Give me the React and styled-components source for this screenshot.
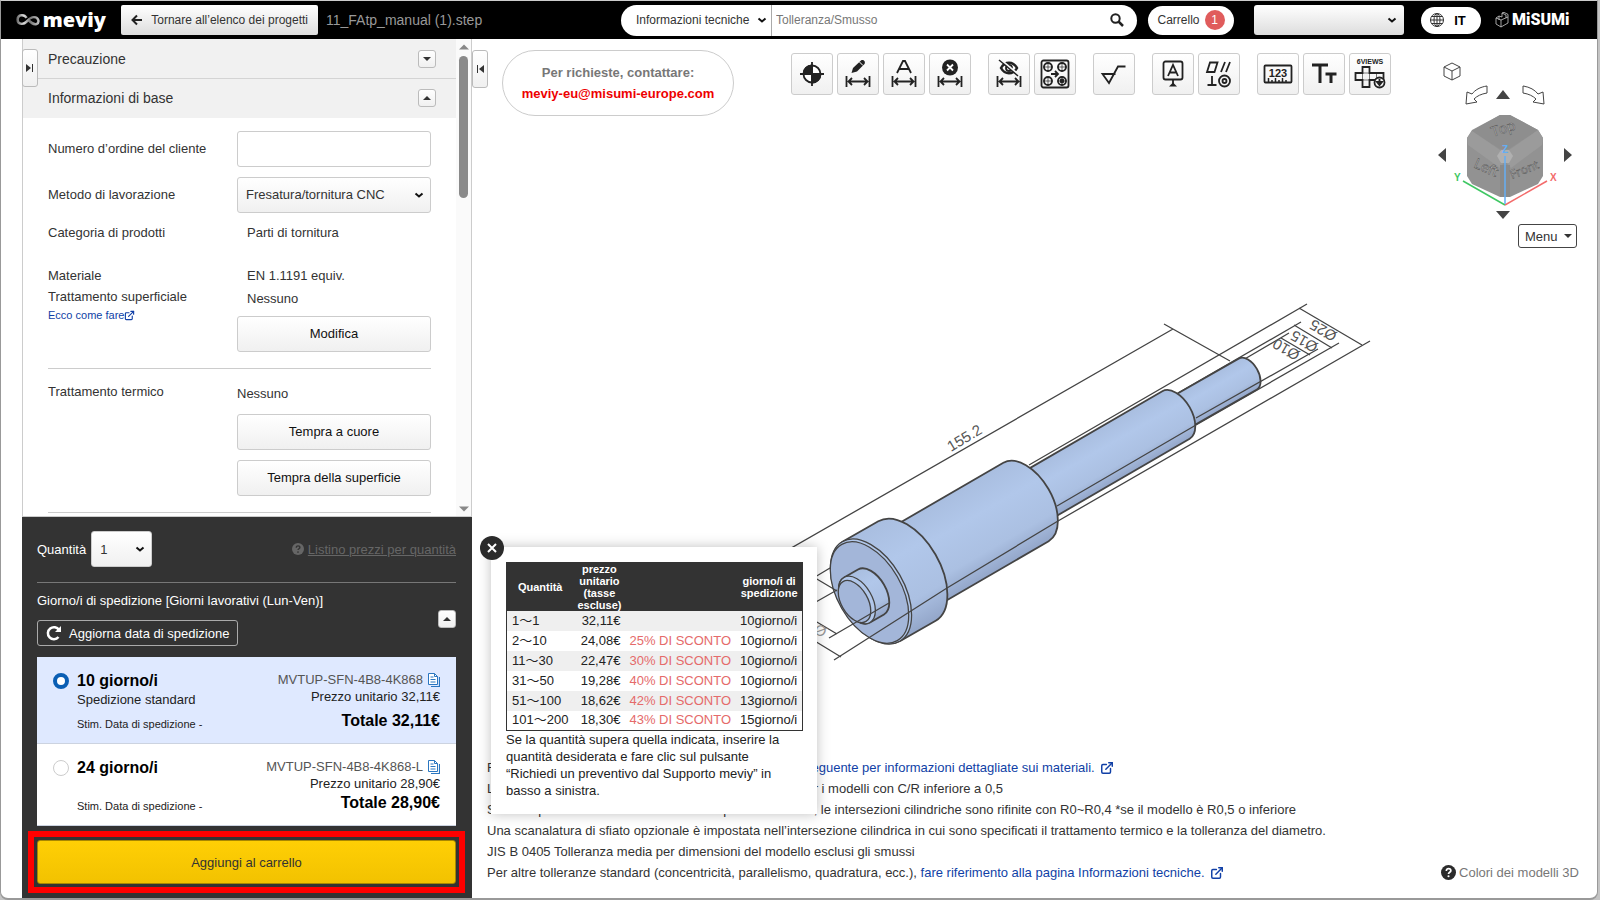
import React, { useState } from "react";
import styled, { createGlobalStyle, css } from "styled-components";
import { ExternalLink } from "lucide-react";

const GlobalStyle = createGlobalStyle`
  * {
    box-sizing: border-box;
  }
  body {
    margin: 0;
    background: #c4c4c4;
    color: #333;
    font-family: "Liberation Sans", Arial, sans-serif;
    font-size: 13px;
  }
  button,
  input,
  select {
    color: #333;
    font: inherit;
  }
  a {
    color: #103fa6;
    text-decoration: none;
  }
`;

const raised = css`
  border: 1px solid #ccc;
  border-radius: 3px;
  background: linear-gradient(#fff, #f0f0f0);
`;

const Window = styled.div`
  display: flex;
  flex-direction: column;
  min-height: 100vh;
  margin-right: 2px;
  border: 1px solid #999;
  border-top-color: #ccc;
  border-bottom-width: 2px;
  border-radius: 0 0 8px 8px;
  background: #fff;
`;

/* header */

const TopBar = styled.header`
  display: flex;
  align-items: center;
  height: 38px;
  padding: 0 26px 0 15px;
  background: #000;
`;

const Brand = styled.a`
  display: flex;
  align-items: center;
  gap: 3px;
  width: 90px;
  color: #fff;
  font: 800 20px/24px "Open Sans", sans-serif;
`;

const BackButton = styled.button`
  display: flex;
  align-items: center;
  justify-content: space-between;
  width: 197px;
  height: 30px;
  margin: 0 8px 0 15px;
  padding: 0 10px;
  border: 0;
  border-radius: 2px;
  background: linear-gradient(#fff, #ddd);
  font-size: 12px;
`;

const FileName = styled.span`
  color: #999;
  font-size: 14px;
`;

const Search = styled.form`
  display: flex;
  align-items: center;
  width: 516px;
  height: 31px;
  margin-left: auto;
  padding: 0 13px 0 7px;
  border-radius: 16px;
  background: #fff;
  font-size: 12px;
`;

const SearchInput = styled.input`
  flex: 1;
  height: 31px;
  min-width: 0;
  padding: 0 4px;
  border: 0;
  border-left: 1px solid #aaa;
  outline: 0;
  &::placeholder {
    color: #777;
    opacity: 1;
  }
`;

const PlainButton = styled.button`
  display: flex;
  padding: 0;
  border: 0;
  background: none;
`;

const Pill = styled.button`
  display: flex;
  align-items: center;
  justify-content: center;
  gap: 5px;
  width: 86px;
  height: 29px;
  margin: 0 20px 0 11px;
  padding: 0;
  border: 0;
  border-radius: 15px;
  background: #fff;
  font-size: 12px;
`;

const Language = styled(Pill)`
  gap: 10px;
  width: 60px;
  height: 27px;
  margin: 0 14px 0 17px;
  padding-right: 6px;
  color: #000;
  font-size: 13px;
  font-weight: bold;
`;

const Count = styled.span`
  width: 20px;
  height: 20px;
  border-radius: 50%;
  background: #e05c5c;
  color: #fff;
  line-height: 20px;
  text-align: center;
`;

const Misumi = styled.a`
  display: flex;
  align-items: center;
  gap: 3px;
  width: 76px;
  color: #fff;
  font: 900 16px/20px Roboto, sans-serif;
`;

const SelectBox = styled.div`
  display: grid;
  align-items: center;
  width: ${(props) => props.$width};
  margin: ${(props) => props.$margin || "0"};
  > * {
    grid-area: 1 / 1;
  }
  > svg {
    justify-self: end;
    margin-right: ${(props) => (props.$flat ? "4px" : "7px")};
    pointer-events: none;
  }
`;

const SelectInput = styled.select`
  width: 100%;
  height: ${(props) => props.$height || "36px"};
  padding: 0 8px;
  ${raised}
  appearance: none;
  ${(props) => props.$flat && "border: 0; background: none;"}
  ${(props) => props.$dark && "border: 0; background: linear-gradient(#fff, #ddd);"}
`;

const Select = ({ width, margin, flat, children, ...props }) => (
  <SelectBox $width={width} $margin={margin} $flat={flat}>
    <SelectInput $flat={flat} {...props}>
      {children}
    </SelectInput>
    <svg width="10" height="10" viewBox="0 0 10 10">
      <path d="M1.5 3.5 5 6.5 8.500 3.500" fill="none" stroke="#111" strokeWidth="2" />
    </svg>
  </SelectBox>
);

/* sidebar */

const Main = styled.main`
  display: flex;
  flex: 1;
  padding-left: 21px;
`;

const Sidebar = styled.aside`
  position: relative;
  display: flex;
  flex: none;
  flex-direction: column;
  width: 450px;
  border: solid #ccc;
  border-width: 0 1px;
`;

const Scroller = styled.div`
  display: flex;
  flex: 1;
  border-bottom: 1px solid #ccc;
`;

const Form = styled.div`
  flex: 1;
`;

const ScrollBar = styled.div`
  display: flex;
  flex-direction: column;
  align-items: center;
  width: 15px;
  padding: 3px 0 2px;
  background: #fafafa;
`;

const Thumb = styled.div`
  width: 9px;
  height: 142px;
  margin: 4px 0 auto;
  border-radius: 5px;
  background: #8a8a8a;
`;

const SectionHead = styled.h2`
  display: flex;
  align-items: center;
  justify-content: space-between;
  height: ${(props) => (props.$open ? "39px" : "40px")};
  margin: 0;
  padding: 0 20px 0 25px;
  border-bottom: 1px solid ${(props) => (props.$open ? "#f1f1f1" : "#d4d4d4")};
  background: #f1f1f1;
  font-size: 14px;
  font-weight: normal;
`;

const Toggle = styled.button`
  display: flex;
  align-items: center;
  justify-content: center;
  width: 18px;
  height: 18px;
  padding: 0;
  ${raised}
  border-color: #bbb;
`;

const EdgeTab = styled.button`
  display: flex;
  align-items: center;
  justify-content: center;
  width: 16px;
  height: 38px;
  padding: 0;
  ${raised}
  border-color: #bbb;
`;

const SidebarTab = styled(EdgeTab)`
  position: absolute;
  top: 10px;
  left: -1px;
`;

const Section = styled.section`
  display: grid;
  grid-template-columns: 189px 1fr;
  row-gap: 10px;
  margin: 0 25px;
  padding: 13px 0 16px;
  border-bottom: 1px solid #ccc;
  line-height: 20px;
`;

const Label = styled.label`
  align-self: center;
`;

const TextInput = styled.input`
  width: 100%;
  height: 36px;
  padding: 0 8px;
  border: 1px solid #ccc;
  border-radius: 3px;
`;

const Names = styled.div`
  display: flex;
  flex-direction: column;
  gap: 1px;
  padding-top: ${(props) => props.$top || "0"};
`;

const Values = styled(Names)`
  gap: ${(props) => props.$gap || "3px"};
`;

const Value = styled.span`
  padding-left: ${(props) => (props.$inset ? "10px" : "0")};
`;

const SmallLink = styled.a`
  display: flex;
  align-items: center;
  font-size: 11px;
  line-height: 14px;
`;

const FormButton = styled.button`
  height: 36px;
  ${raised}
  color: #111;
  ${Value}[data-last] + & {
    margin-top: 4px;
  }
`;

/* order panel */

const Order = styled.section`
  margin: 0 -1px;
  padding: 14px 16px 5px 15px;
  background: #333;
  color: #fff;
`;

const QuantityRow = styled.div`
  display: flex;
  align-items: center;
  padding-bottom: 15px;
  border-bottom: 1px solid #777;
`;

const PriceListLink = styled.a`
  display: flex;
  align-items: center;
  gap: 4px;
  margin-left: auto;
  color: #666;
  span {
    text-decoration: underline;
  }
`;

const ShippingTitle = styled.h3`
  margin: 9px 0 0;
  font-size: 13px;
  font-weight: normal;
  line-height: 18px;
`;

const ShippingRow = styled.div`
  display: flex;
  align-items: flex-start;
  justify-content: space-between;
  margin-bottom: 11px;
`;

const Refresh = styled.button`
  display: flex;
  align-items: center;
  gap: 7px;
  height: 26px;
  margin-top: 10px;
  padding: 0 8px;
  border: 1px solid #aaa;
  border-radius: 3px;
  background: none;
  color: #fff;
`;

const Option = styled.label`
  display: flex;
  min-height: ${(props) => (props.$selected ? "87px" : "82px")};
  padding: 14px 16px 12px;
  border-bottom: 1px solid #ccd3e0;
  background: ${(props) => (props.$selected ? "#dfe9ff" : "#fff")};
  color: #222;
`;

const Radio = styled.input`
  width: 16px;
  height: 16px;
  margin: 2px 8px 0 15px;
  border: 1px solid #ccc;
  border-radius: 50%;
  background: #fff;
  appearance: none;
  ${Option} & {
    margin-left: 0;
  }
  &:checked {
    border: 4px solid #0a5eb4;
  }
`;

const OptionSide = styled.span`
  display: flex;
  flex-direction: column;
  line-height: 17px;
  ${(props) => props.$right && "margin-left: auto; align-items: flex-end;"}
`;

const Strong = styled.strong`
  color: #000;
  font-size: 16px;
  line-height: 20px;
`;

const Bottom = styled.span`
  margin-top: auto;
  font-size: 11px;
  line-height: 14px;
`;

const Code = styled.span`
  display: flex;
  align-items: center;
  gap: 5px;
  color: #555;
`;

const Highlight = styled.div`
  margin: 5px -9px 0;
  padding: 3px;
  border: 6px solid #f00;
`;

const CartButton = styled.button`
  display: block;
  width: 100%;
  height: 44px;
  border: 1px solid #a88700;
  border-radius: 3px;
  background: linear-gradient(#ffcf05, #f2c200);
`;

/* viewer */

const Viewer = styled.section`
  position: relative;
  display: flex;
  flex: 1;
  flex-direction: column;
  min-width: 0;
`;

const ViewerTop = styled.div`
  display: flex;
  align-items: flex-start;
  padding: 11px 20px 0 0;
`;

const Contact = styled.address`
  width: 232px;
  margin: 0 57px 0 14px;
  padding: 11px 0;
  border: 1px solid #ccc;
  border-radius: 33px;
  color: #777;
  font-style: normal;
  font-weight: bold;
  line-height: 21px;
  text-align: center;
  a {
    color: #e00;
  }
`;

const Tools = styled.div`
  display: flex;
  gap: 17px;
  padding-top: 3px;
`;

const ToolGroup = styled.div`
  display: flex;
  gap: 4px;
`;

const Tool = styled.button`
  width: 42px;
  height: 42px;
  padding: 0;
  ${raised}
  svg {
    display: block;
    margin: -1px;
  }
`;

const Orientation = styled.div`
  display: flex;
  flex-direction: column;
  align-items: flex-end;
  margin-left: auto;
  padding-top: 2px;
`;

const MenuButton = styled.button`
  display: flex;
  align-items: center;
  justify-content: space-between;
  width: 59px;
  height: 24px;
  padding: 0 4px 0 6px;
  border: 1px solid #444;
  border-radius: 3px;
  background: #fff;
`;

const Stage = styled.div`
  display: flex;
  flex: 1;
  align-items: center;
  justify-content: center;
  min-height: 0;
`;

const ViewerFoot = styled.footer`
  display: flex;
  align-items: flex-end;
  justify-content: space-between;
  padding: 0 18px 15px 15px;
  line-height: 21px;
  white-space: nowrap;
`;

const Note = styled.p`
  margin: 0;
  svg {
    margin-left: 2px;
    vertical-align: -3px;
  }
`;

const ColourHelp = styled.a`
  display: flex;
  align-items: center;
  gap: 3px;
  color: #777;
`;

const Popup = styled.div`
  position: absolute;
  bottom: 84px;
  left: 19px;
  width: 326px;
  padding: 15px;
  background: #fff;
  box-shadow: 0 0 12px rgba(0, 0, 0, 0.25);
  color: #222;
`;

const Close = styled.button`
  position: absolute;
  top: -11px;
  left: -11px;
  display: flex;
  align-items: center;
  justify-content: center;
  width: 24px;
  height: 24px;
  padding: 0;
  border: 0;
  border-radius: 50%;
  background: #2b2b2b;
`;

const PriceTable = styled.table`
  width: 100%;
  border: 1px solid #333;
  border-collapse: collapse;
  font-family: "Liberation Sans", Arial, "Noto Sans CJK JP", sans-serif;
  line-height: 18px;
  th {
    padding: 0 4px;
    background: #333;
    color: #fff;
    font-size: 11px;
    line-height: 12px;
  }
  td {
    height: 20px;
    padding: 0 5px 0 4px;
    text-align: right;
    white-space: nowrap;
  }
  td:first-child {
    padding-left: 5px;
    text-align: left;
  }
  tbody tr:nth-child(odd) {
    background: #efefef;
  }
`;

const Discount = styled.td`
  color: #e56a6a;
`;

const PopupText = styled.p`
  margin: 0;
  line-height: 17px;
`;

/* icons */

const Triangle = ({ down, size = 8, fill = "#333" }) => (
  <svg width={size} height={size} viewBox="0 0 8 8">
    <path d={down ? "M0 2h8L4 6z" : "M0 6h8L4 2z"} fill={fill} />
  </svg>
);

const Question = ({ bg, fg, size }) => (
  <svg width={size} height={size} viewBox="0 0 14 14">
    <circle cx="7" cy="7" r="7" fill={bg} />
    <path
      d="M5 5.500C5 4 6 3.300 7 3.300s2.200.7 2.200 2c0 1.400-2.200 1.500-2.200 3"
      fill="none"
      stroke={fg}
      strokeWidth="1.600"
    />
    <circle cx="7" cy="10.500" r="1" fill={fg} />
  </svg>
);

const CopyIcon = () => (
  <svg width="12" height="14" viewBox="0 0 12 14" fill="none" stroke="#2a76c0">
    <path d="M.5.5h6l3 3v8h-9z" fill="#fff" />
    <path d="M2.500 4h3M2.500 6.500h5M2.500 9h5M6.500.5v3h3" />
    <path d="M11.500 4v9.500H3" strokeWidth="1.200" />
  </svg>
);

const Measure = () => (
  <path d="M9.500 23v11M32.500 23v11M11.500 28.500h19M15 25l-3.500 3.500L15 32M27 25l3.500 3.500L27 32" />
);

const Hole = ({ x, y }) => (
  <>
    <circle cx={x} cy={y} r="4" />
    <path d={`M${x - 5} ${y}h10M${x} ${y - 5}v10`} strokeWidth=".7" />
  </>
);

const toolGroups = [
  [
    [
      "Origine",
      <>
        <circle cx="21" cy="21" r="8.500" fill="#fff" />
        <path d="M21 21V12.500A8.500 8.500 0 0 0 12.500 21zM21 21v8.500A8.500 8.500 0 0 0 29.500 21z" fill="#222" />
        <path d="M21 9v24M9 21h24" />
      </>,
    ],
    [
      "Modifica quota",
      <>
        <path d="m14.500 20 1.500-5 8-7.500c2-1.500 5 1 3.500 3.500L20 18.500z" fill="#222" stroke="none" />
        <path d="m22.500 9 3.500 3.500" stroke="#fff" strokeWidth="1" />
        <Measure />
      </>,
    ],
    [
      "Testo quota",
      <>
        <path d="m14 20 6-12h2l6 12M16.500 16h9" />
        <Measure />
      </>,
    ],
    [
      "Elimina quota",
      <>
        <circle cx="21" cy="14.500" r="8" fill="#222" stroke="none" />
        <path d="m18 11.500 6 6m0-6-6 6" stroke="#fff" />
        <Measure />
      </>,
    ],
  ],
  [
    [
      "Nascondi quota",
      <>
        <path d="M13 15c4-7 12-7 16 0-4 7-12 7-16 0z" strokeWidth="2.500" />
        <circle cx="21" cy="15" r="3" />
        <path d="m13 7 18 15" stroke="#f8f8f8" strokeWidth="2" />
        <path d="m11 7 19 16" strokeWidth="1.500" />
        <Measure />
      </>,
    ],
    [
      "Gruppi di fori",
      <>
        <rect x="7.500" y="7.500" width="27" height="27" rx="2" />
        <Hole x={14} y={14} />
        <Hole x={28} y={14} />
        <Hole x={14} y={28} />
        <Hole x={28} y={28} />
        <circle cx="28" cy="28" r="1.500" fill="#222" />
        <path d="M17 21h7M21 18l3 3-3 3" />
      </>,
    ],
  ],
  [["Rugosità", <path d="M22.500 21H9.500l6.500 9 9-16.500h7.500" />]],
  [
    [
      "Riferimento",
      <>
        <rect x="11.500" y="8.500" width="19" height="18" rx="2" />
        <path d="m16 23 5-11 5 11M18 19.500h6M21 27v4" />
        <path d="m17 33.500 4-4 4 4z" fill="#222" stroke="none" />
      </>,
    ],
    [
      "Tolleranza geometrica",
      <>
        <path d="M12 9.500h7.500l-3 9.500H9zM23 19l4-10M28 19l4-10M14 23v9M9.500 32h9" />
        <circle cx="26.500" cy="28" r="5.500" />
        <circle cx="26.500" cy="28" r="2" />
      </>,
    ],
  ],
  [
    [
      "Numerazione",
      <>
        <rect x="7.500" y="12.500" width="27" height="17" rx="1" />
        <path d="M11.500 25v4M15 27v2M18.500 25v4M22 27v2M25.500 25v4M29 27v2" strokeWidth="1.500" />
        <text x="21" y="23.500" fontSize="11" fontWeight="bold" textAnchor="middle" fill="#222" stroke="none">
          123
        </text>
      </>,
    ],
    ["Dimensione testo", <path d="M9 12h16M17 12v18M22.500 21h11M28 21v9" strokeWidth="3" />],
    [
      "6 viste",
      <>
        <text x="21" y="11" fontSize="7" fontWeight="bold" textAnchor="middle" fill="#222" stroke="none">
          6VIEWS
        </text>
        <path d="M13.500 14h7v6h14v7h-14v7h-7v-7h-7v-7h7z" />
        <path d="M13.500 20h7v7h-7zM27.500 20v7" strokeWidth=".6" />
        <circle cx="30.500" cy="29.500" r="5" fill="#f4f4f4" />
        <path d="M30.500 26v5M28 29l2.500 3 2.500-3z" fill="#222" />
      </>,
    ],
  ],
];

/* 3D drawing: axis runs at 30 degrees, round faces are ellipses turned by 60 degrees */

const RATIO = 0.577;
const LINE = "#444";

const Cylinder = ({ id, from, to, r }) => {
  const [x1, y1] = from;
  const [x2, y2] = to;
  const ux = r * 0.5;
  const uy = r * 0.866;
  const arc = `A${r} ${r * RATIO} 60 0`;
  return (
    <>
      <linearGradient id={id} gradientUnits="userSpaceOnUse" x1={x1 - ux} y1={y1 - uy} x2={x1 + ux} y2={y1 + uy}>
        <stop offset="0" stopColor="#a9bee0" />
        <stop offset=".35" stopColor="#b1c7ea" />
        <stop offset=".75" stopColor="#abc0e2" />
        <stop offset="1" stopColor="#93a6c9" />
      </linearGradient>
      <path
        d={`M${x1 - ux} ${y1 - uy}L${x2 - ux} ${y2 - uy}${arc} 1 ${x2 + ux} ${y2 + uy}L${x1 + ux} ${y1 + uy}${arc} 1 ${x1 - ux} ${y1 - uy}z`}
        fill={`url(#${id})`}
        strokeWidth="1.800"
      />
    </>
  );
};

const Face = ({ x, y, r, fill = "#a3b6d9" }) => (
  <ellipse rx={r} ry={r * RATIO} fill={fill} transform={`translate(${x} ${y}) rotate(60)`} />
);

const Dimension = ({ x, y, angle, fill = "#555", children }) => (
  <text transform={`translate(${x} ${y}) rotate(${angle})`} fontSize="15" fill={fill} stroke="none">
    {children}
  </text>
);

const Model = () => (
  <svg width="692" height="500" viewBox="689 253 692 500" fill="none" stroke={LINE} strokeWidth="1.300">
    <path d="M760 566 1173 329M1164 324l66 37M1029 465l278-161M1299 308l63 37M1178 393l123-71M1294 325l38 23M1243 360l46-27M1281 338l29 17" />
    <Cylinder id="tip" from={[1176, 415]} to={[1248, 374]} r={17.9} />
    <Cylinder id="neck" from={[1026, 502]} to={[1176, 415]} r={27.4} />
    <Cylinder id="barrel" from={[907, 571]} to={[1026, 502]} r={45.3} />
    <Cylinder id="head" from={[872, 591]} to={[907, 571]} r={57.4} />
    <Face x={871} y={591.5} r={57.4} fill="#b1c7ea" />
    <Face x={869.5} y={592.5} r={55.5} />
    <Cylinder id="boss" from={[857, 600]} to={[871, 592]} r={26} />
    <Face x={857} y={600} r={26} fill="#b1c7ea" />
    <Face x={854.5} y={601.5} r={23} />
    <path d="M834 660 947 588 1058 521 1370 341M1057 506l139-81 143-82M1196 418l122-69" />
    <path d="M800 586l30-18M800 569l37 22M800 611l37-21M800 612l37 22M829 638l60-35M800 632l41 25" />
    <Dimension x={951} y={452} angle={-31}>
      155.2
    </Dimension>
    <Dimension x={1338} y={333} angle={210}>
      Ø25
    </Dimension>
    <Dimension x={1319} y={344} angle={210}>
      Ø15
    </Dimension>
    <Dimension x={1301} y={352} angle={210}>
      Ø10
    </Dimension>
    <Dimension x={828} y={629} angle={210} fill="#999">
      Ø
    </Dimension>
  </svg>
);

const ViewCube = () => (
  <svg width="142" height="172" viewBox="1437 52 142 172" fill="none" stroke="#444">
    <path d="m1446 67 8-4 8 4v9l-8 4-8-4zM1446 67l8 4 8-4M1454 71v9" />
    <path d="M1489 86c-7 1-12 4-15 8l-5-2-1 12 11-2-3-3c3-3 7-5 13-6zM1525 86c7 1 12 4 15 8l5-2 1 12-11-2 3-3c-3-3-7-5-13-6z" />
    <path
      d="m1505 90 7 9h-14zM1505 219l7-8h-14zM1440 155l8-7v14zM1574 155l-8-7v14z"
      fill="#444"
      stroke="none"
    />
    <g stroke="none">
      <path d="M1502 115h10l28 15 5 8v38l-5 8-28 13h-10l-28-13-5-8v-38l5-8z" fill="#929292" />
      <path d="m1474 131 28-16h10l28 15-29 19h-9z" fill="#8e8e8e" />
      <path d="m1469 138 5-7 28 19 5 11-5 7-32-23zM1545 138l-5-8-29 20-4 11 6 7 31-23z" fill="#9b9b9b" />
      <path d="M1502 165h10v32h-10z" fill="#8a8a8a" />
      <path d="m1499 156 4-6h8l4 6-4 7h-8z" fill="#b0b0b0" />
      <g fill="#c4c4c4" stroke="#555" strokeWidth=".5" fontSize="14" fontFamily="Open Sans, sans-serif">
        <text transform="translate(1495 137) rotate(-18)">Top</text>
        <text transform="translate(1475 167) rotate(24)">Left</text>
        <text transform="translate(1514 179) rotate(-22)" fontSize="12">
          Front
        </text>
      </g>
    </g>
    <path d="m1507 205-42-24" stroke="#3fc763" strokeWidth="1.500" />
    <path d="m1507 205 42-24" stroke="#f36b6b" strokeWidth="1.500" />
    <path d="M1507 204v-48" stroke="#64aef4" strokeWidth="1.500" />
    <g stroke="none" fontSize="10" fontWeight="bold">
      <text x="1456" y="181" fill="#3fc763">
        Y
      </text>
      <text x="1552" y="181" fill="#f36b6b">
        X
      </text>
      <text x="1504" y="153" fill="#64aef4">
        Z
      </text>
    </g>
  </svg>
);

const LinkIcon = ({ size = 14 }) => <ExternalLink size={size} strokeWidth={2.5} />;

const prices = [
  ["1〜1", "32,11€", "", "10giorno/i"],
  ["2〜10", "24,08€", "25% DI SCONTO", "10giorno/i"],
  ["11〜30", "22,47€", "30% DI SCONTO", "10giorno/i"],
  ["31〜50", "19,28€", "40% DI SCONTO", "10giorno/i"],
  ["51〜100", "18,62€", "42% DI SCONTO", "13giorno/i"],
  ["101〜200", "18,30€", "43% DI SCONTO", "15giorno/i"],
];

const options = [
  { days: "10", sub: "Spedizione standard", code: "MVTUP-SFN-4B8-4K868", price: "32,11€" },
  { days: "24", sub: "", code: "MVTUP-SFN-4B8-4K868-L", price: "28,90€" },
];

const Header = () => (
  <TopBar>
    <Brand href="#">
      <svg width="29" height="16" viewBox="0 0 29 16" fill="none">
        <defs>
          <linearGradient id="loop">
            <stop offset="0" stopColor="#777" />
            <stop offset=".3" stopColor="#ddd" />
            <stop offset=".6" stopColor="#777" />
            <stop offset="1" stopColor="#bbb" />
          </linearGradient>
        </defs>
        <path
          d="M13 5.500C10 .5 2 1 2 7.500c0 7 8 6 11 2.500 3-3.500 5-5.500 9-5.500 6 0 7 7 3 8.500-4 1-7-2-11-6"
          stroke="url(#loop)"
          strokeWidth="3"
        />
      </svg>
      meviy
    </Brand>
    <BackButton>
      <svg width="12" height="12" viewBox="0 0 12 12" fill="none" stroke="#222" strokeWidth="2">
        <path d="M11 6H2M6 1.500 1.500 6 6 10.500" />
      </svg>
      Tornare all’elenco dei progetti
    </BackButton>
    <FileName>11_FAtp_manual (1).step</FileName>
    <Search>
      <Select flat width="143px" $height="31px" aria-label="Ambito di ricerca">
        <option>Informazioni tecniche</option>
      </Select>
      <SearchInput placeholder="Tolleranza/Smusso" aria-label="Cerca" />
      <PlainButton type="button" aria-label="Avvia ricerca">
        <svg width="14" height="14" viewBox="0 0 14 14" fill="none" stroke="#222" strokeWidth="2">
          <circle cx="5.500" cy="5.500" r="4.200" />
          <path d="m8.500 8.500 4.500 4.500" strokeWidth="2.500" />
        </svg>
      </PlainButton>
    </Search>
    <Pill>
      Carrello <Count>1</Count>
    </Pill>
    <Select width="150px" $height="30px" $dark aria-label="Account">
      <option></option>
    </Select>
    <Language>
      <svg width="14" height="14" viewBox="0 0 14 14" fill="none" stroke="#333">
        <circle cx="7" cy="7" r="6.500" />
        <ellipse cx="7" cy="7" rx="3" ry="6.500" />
        <path d="M7 .5v13M.5 7h13M1.500 3.500h11M1.500 10.500h11" />
      </svg>
      IT
    </Language>
    <Misumi href="#">
      <svg width="14" height="16" viewBox="0 0 14 16" fill="none" stroke="#ccc" strokeWidth=".8">
        <path d="m1 6 5 2v7l-5-3zM6 8l7-3v6l-7 4M1 6l3-2 3 1V1l4 2v3M7 1l2-.6 4 2V5M4 4v4" />
      </svg>
      MiSUMi
    </Misumi>
  </TopBar>
);

const OrderPanel = () => {
  const [selected, setSelected] = useState("10");
  return (
    <Order>
      <QuantityRow>
        <label htmlFor="quantity">Quantità</label>
        <Select id="quantity" width="61px" margin="0 0 0 5px">
          <option>1</option>
        </Select>
        <PriceListLink href="#">
          <Question size={12} bg="#666" fg="#333" />
          <span>Listino prezzi per quantità</span>
        </PriceListLink>
      </QuantityRow>
      <ShippingTitle>Giorno/i di spedizione [Giorni lavorativi (Lun-Ven)]</ShippingTitle>
      <ShippingRow>
        <Refresh>
          <svg width="16" height="16" viewBox="0 0 16 16" fill="none" stroke="#fff" strokeWidth="2.500">
            <path d="M12.500 12A6 6 0 1 1 13 5" />
            <path d="M15 1v6H9z" fill="#fff" stroke="none" />
          </svg>
          Aggiorna data di spedizione
        </Refresh>
        <Toggle aria-label="Comprimi">
          <Triangle />
        </Toggle>
      </ShippingRow>
      {options.map(({ days, sub, code, price }) => (
        <Option key={days} $selected={selected === days}>
          <Radio type="radio" name="shipping" checked={selected === days} onChange={() => setSelected(days)} />
          <OptionSide>
            <Strong>{days} giorno/i</Strong>
            <span>{sub}</span>
            <Bottom>Stim. Data di spedizione -</Bottom>
          </OptionSide>
          <OptionSide $right>
            <Code>
              {code} <CopyIcon />
            </Code>
            <span>Prezzo unitario {price}</span>
            <Bottom>
              <Strong>Totale {price}</Strong>
            </Bottom>
          </OptionSide>
        </Option>
      ))}
      <Highlight>
        <CartButton>Aggiungi al carrello</CartButton>
      </Highlight>
    </Order>
  );
};

const PricePopup = () => (
  <Popup>
    <Close aria-label="Chiudi">
      <svg width="10" height="10" viewBox="0 0 10 10" stroke="#fff" strokeWidth="2">
        <path d="m1 1 8 8m0-8-8 8" />
      </svg>
    </Close>
    <PriceTable>
      <thead>
        <tr>
          <th>Quantità</th>
          <th>
            prezzo
            <br />
            unitario
            <br />
            (tasse
            <br />
            escluse)
          </th>
          <th></th>
          <th>
            giorno/i di
            <br />
            spedizione
          </th>
        </tr>
      </thead>
      <tbody>
        {prices.map(([range, price, discount, days]) => (
          <tr key={range}>
            <td>{range}</td>
            <td>{price}</td>
            <Discount>{discount}</Discount>
            <td>{days}</td>
          </tr>
        ))}
      </tbody>
    </PriceTable>
    <PopupText>
      Se la quantità supera quella indicata, inserire la quantità desiderata e fare clic sul pulsante “Richiedi un
      preventivo dal Supporto meviy” in basso a sinistra.
    </PopupText>
  </Popup>
);

const App = () => (
  <Window>
    <GlobalStyle />
    <Header />
    <Main>
      <Sidebar>
        <SidebarTab aria-label="Chiudi pannello">
          <svg width="8" height="8" viewBox="0 0 8 8" fill="#333">
            <path d="M0 0v8l5-4zM6 0h1v8H6z" />
          </svg>
        </SidebarTab>
        <Scroller>
          <Form>
            <SectionHead>
              Precauzione
              <Toggle aria-label="Espandi">
                <Triangle down />
              </Toggle>
            </SectionHead>
            <SectionHead $open>
              Informazioni di base
              <Toggle aria-label="Comprimi">
                <Triangle />
              </Toggle>
            </SectionHead>
            <Section>
              <Label htmlFor="order">Numero d’ordine del cliente</Label>
              <TextInput id="order" />
              <Label htmlFor="method">Metodo di lavorazione</Label>
              <Select id="method">
                <option>Fresatura/tornitura CNC</option>
              </Select>
              <Names>Categoria di prodotti</Names>
              <Values>
                <Value $inset>Parti di tornitura</Value>
              </Values>
              <Names $top="13px">
                <span>Materiale</span>
                <span>Trattamento superficiale</span>
                <SmallLink href="#">
                  Ecco come fare
                  <LinkIcon size={11} />
                </SmallLink>
              </Names>
              <Values $top="13px">
                <Value $inset>EN 1.1191 equiv.</Value>
                <Value $inset data-last>
                  Nessuno
                </Value>
                <FormButton>Modifica</FormButton>
              </Values>
            </Section>
            <Section>
              <Names>Trattamento termico</Names>
              <Values $top="2px" $gap="10px">
                <Value>Nessuno</Value>
                <FormButton>Tempra a cuore</FormButton>
                <FormButton>Tempra della superficie</FormButton>
              </Values>
            </Section>
          </Form>
          <ScrollBar>
            <Triangle size={10} fill="#888" />
            <Thumb />
            <Triangle down size={10} fill="#888" />
          </ScrollBar>
        </Scroller>
        <OrderPanel />
      </Sidebar>
      <Viewer>
        <ViewerTop>
          <EdgeTab aria-label="Apri pannello">
            <svg width="8" height="8" viewBox="0 0 8 8" fill="#333">
              <path d="M8 0v8L3 4zM1 0h1v8H1z" />
            </svg>
          </EdgeTab>
          <Contact>
            Per richieste, contattare:
            <br />
            <a href="mailto:meviy-eu@misumi-europe.com">meviy-eu@misumi-europe.com</a>
          </Contact>
          <Tools>
            {toolGroups.map((group) => (
              <ToolGroup key={group[0][0]}>
                {group.map(([name, icon]) => (
                  <Tool key={name} aria-label={name}>
                    <svg width="42" height="42" viewBox="0 0 42 42" fill="none" stroke="#222" strokeWidth="1.800">
                      {icon}
                    </svg>
                  </Tool>
                ))}
              </ToolGroup>
            ))}
          </Tools>
          <Orientation>
            <ViewCube />
            <MenuButton>
              Menu <Triangle down />
            </MenuButton>
          </Orientation>
        </ViewerTop>
        <Stage>
          <Model />
        </Stage>
        <ViewerFoot>
          <div>
            <Note>
              Fare riferimento al collegamento mostrato nella{" "}
              <a href="#">
                pagina seguente per informazioni dettagliate sui materiali. <LinkIcon />
              </a>
            </Note>
            <Note>La tolleranza dello smusso non è indicata nel disegno per i modelli con C/R inferiore a 0,5</Note>
            <Note>
              Se non specificato diversamente nelle impostazioni base, le intersezioni cilindriche sono rifinite con
              R0~R0,4 *se il modello è R0,5 o inferiore
            </Note>
            <Note>
              Una scanalatura di sfiato opzionale è impostata nell’intersezione cilindrica in cui sono specificati il
              trattamento termico e la tolleranza del diametro.
            </Note>
            <Note>JIS B 0405 Tolleranza media per dimensioni del modello esclusi gli smussi</Note>
            <Note>
              Per altre tolleranze standard (concentricità, parallelismo, quadratura, ecc.),{" "}
              <a href="#">
                fare riferimento alla pagina Informazioni tecniche. <LinkIcon />
              </a>
            </Note>
          </div>
          <ColourHelp href="#">
            <Question size={15} bg="#2b2b2b" fg="#fff" />
            Colori dei modelli 3D
          </ColourHelp>
        </ViewerFoot>
        <PricePopup />
      </Viewer>
    </Main>
  </Window>
);

export default App;
